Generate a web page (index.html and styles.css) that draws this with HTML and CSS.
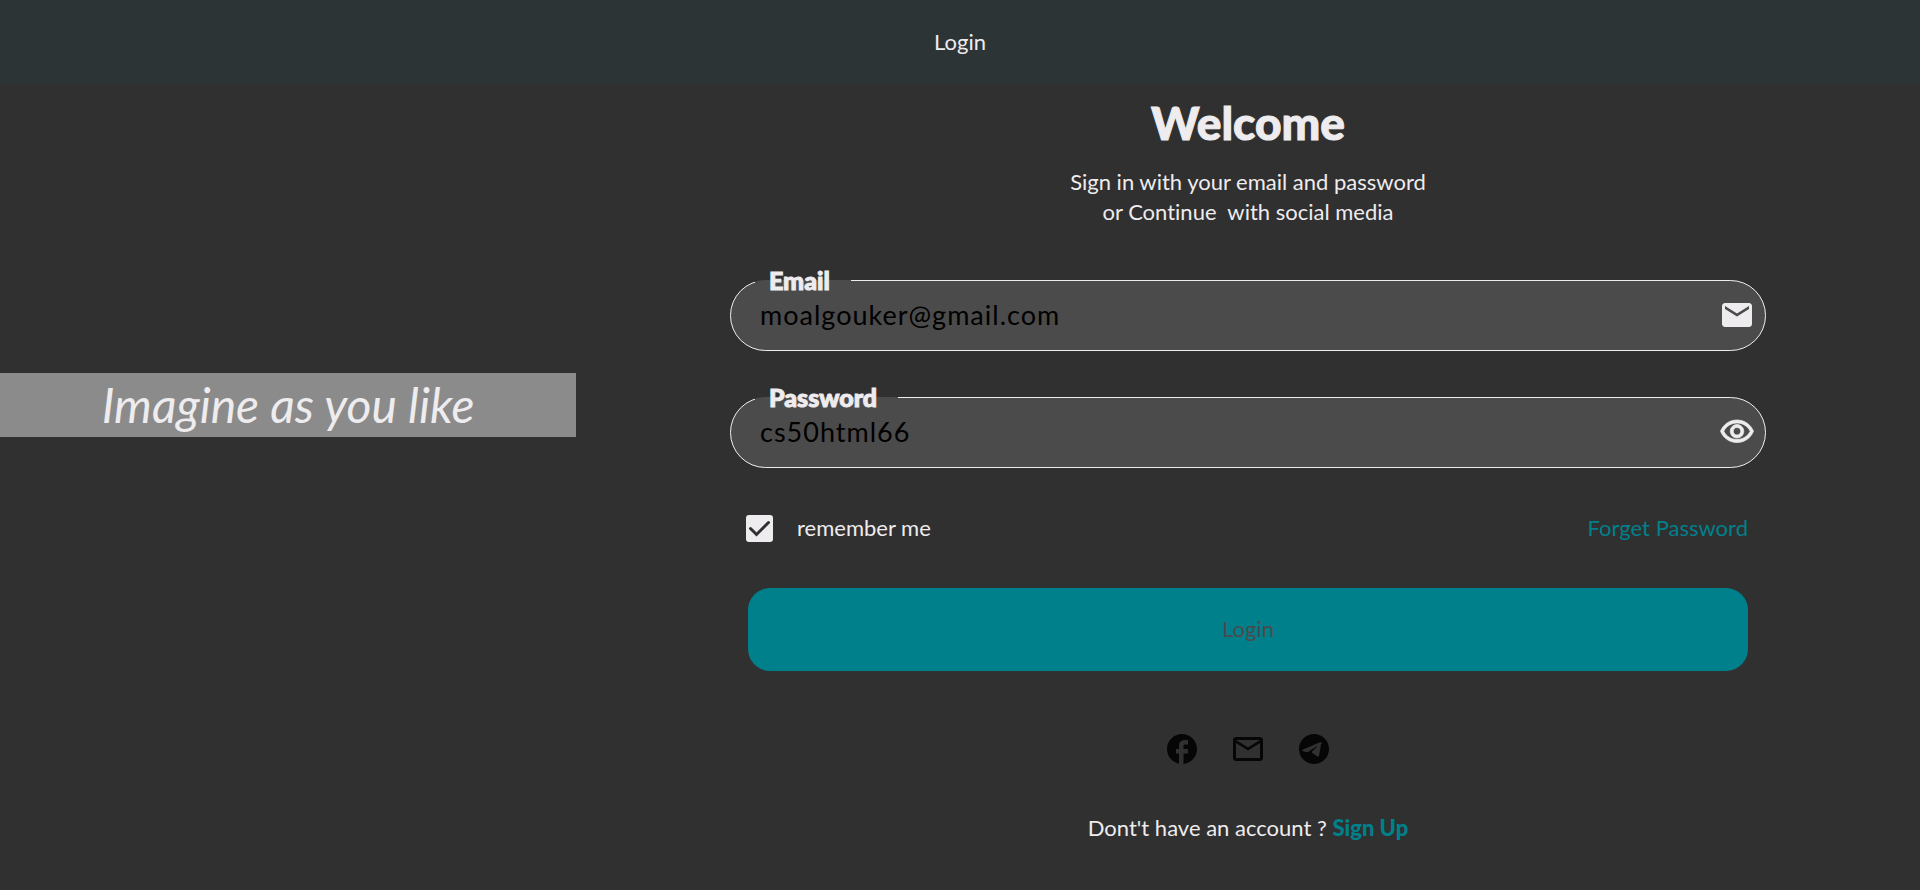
FILE: index.html
```html
<!DOCTYPE html>
<html lang="en">
<head>
<meta charset="utf-8">
<title>Login</title>
<link rel="stylesheet" href="styles.css">
</head>
<body>
<header class="app-bar">Login</header>
<main class="layout">
  <aside class="side"><p class="banner">Imagine as you like</p></aside>
  <section class="panel">
    <h1 class="title">Welcome</h1>
    <p class="intro">Sign in with your email and password<br>or Continue&nbsp; with social media</p>
    <form class="form">
      <fieldset class="field">
        <legend class="legend"><label for="email">Email</label></legend>
        <div class="control">
          <input class="input" id="email" type="email" value="moalgouker@gmail.com">
          <svg class="icon" viewBox="0 0 24 24" aria-hidden="true"><path d="M20 4H4c-1.100 0-1.990.9-1.990 2L2 18c0 1.100.9 2 2 2h16c1.100 0 2-.9 2-2V6c0-1.100-.9-2-2-2zm0 4l-8 5-8-5V6l8 5 8-5v2z"/></svg>
        </div>
      </fieldset>
      <fieldset class="field">
        <legend class="legend"><label for="password">Password</label></legend>
        <div class="control">
          <input class="input" id="password" type="text" value="cs50html66">
          <button class="icon-button" type="button" aria-label="Hide password">
            <svg class="icon icon-bold" viewBox="0 0 24 24" aria-hidden="true"><path d="M12 6c3.790 0 7.170 2.130 8.820 5.500C19.170 14.870 15.790 17 12 17s-7.170-2.130-8.820-5.500C4.830 8.130 8.210 6 12 6m0-2C7 4 2.730 7.110 1 11.500 2.730 15.890 7 19 12 19s9.270-3.110 11-7.500C21.270 7.110 17 4 12 4zm0 5c1.380 0 2.500 1.120 2.500 2.500S13.380 14 12 14s-2.500-1.120-2.500-2.500S10.620 9 12 9m0-2c-2.480 0-4.500 2.020-4.500 4.500S9.520 16 12 16s4.500-2.020 4.500-4.500S14.480 7 12 7z"/></svg>
          </button>
        </div>
      </fieldset>
      <div class="options">
        <label class="remember">
          <span class="check">
            <input class="check-input" type="checkbox" checked>
            <svg class="check-mark" viewBox="0 0 18 18" aria-hidden="true"><path d="M3 9l4 4 8-8"/></svg>
          </span>
          remember me
        </label>
        <a class="link" href="#forgot">Forget Password</a>
      </div>
      <button class="submit" type="submit">Login</button>
    </form>
    <nav class="social" aria-label="Social media">
      <a class="social-link" href="#facebook" aria-label="Facebook"><svg class="icon" viewBox="0 0 24 24"><path d="M22 12c0-5.520-4.480-10-10-10S2 6.480 2 12c0 4.840 3.440 8.870 8 9.800V15H8v-3h2V9.500C10 7.570 11.570 6 13.500 6H16v3h-2c-.55 0-1 .45-1 1v2h3v3h-3v6.950c5.050-.5 9-4.760 9-9.950z"/></svg></a>
      <a class="social-link" href="#mail" aria-label="Mail"><svg class="icon" viewBox="0 0 24 24"><path d="M22 6c0-1.100-.9-2-2-2H4c-1.100 0-2 .9-2 2v12c0 1.100.9 2 2 2h16c1.100 0 2-.9 2-2V6zm-2 0l-8 5-8-5h16zm0 12H4V8l8 5 8-5v10z"/></svg></a>
      <a class="social-link" href="#telegram" aria-label="Telegram"><svg class="icon" viewBox="0 0 24 24"><path d="M12 2C6.480 2 2 6.480 2 12s4.480 10 10 10 10-4.480 10-10S17.520 2 12 2zm4.640 6.800c-.15 1.580-.8 5.420-1.130 7.190-.14.75-.42 1-.68 1.030-.58.05-1.020-.38-1.580-.75-.88-.58-1.380-.94-2.230-1.500-.99-.65-.35-1.010.22-1.590.15-.15 2.710-2.480 2.760-2.690.01-.03.01-.14-.07-.2s-.17-.04-.25-.02c-.11.02-1.790 1.140-5.060 3.350-.48.33-.91.49-1.300.48-.43-.01-1.250-.24-1.870-.44-.75-.24-1.350-.37-1.300-.79.03-.22.33-.44.89-.67 3.500-1.520 5.830-2.530 6.990-3.010 3.330-1.390 4.020-1.630 4.470-1.630.1 0 .32.02.47.14.12.1.16.23.17.33.02.11.03.31.01.4z"/></svg></a>
    </nav>
    <p class="signup">Dont't have an account ? <a class="link link-strong" href="#signup">Sign Up</a></p>
  </section>
</main>
</body>
</html>
```
FILE: styles.css
```css
* { box-sizing: border-box; }
body {
  margin: 0;
  min-height: 100vh;
  display: flex;
  flex-direction: column;
  background: #303030;
  color: #eeecee;
  font: 400 22px/30px Lato, "Liberation Sans", sans-serif;
  font-variant-ligatures: none;
}
.app-bar {
  padding: 27px;
  background: #2d3436;
  text-align: center;
}
.layout {
  flex: 1;
  display: grid;
  grid-template-columns: 3fr 7fr;
}
.side { padding-top: 289px; }
.banner {
  margin: 0;
  padding: 5px;
  background: #8b8b8b;
  font-size: 48px;
  line-height: 54px;
  font-style: italic;
  text-align: center;
}
.panel {
  display: flex;
  flex-direction: column;
  align-items: center;
  padding: 12px 0;
}
.title {
  margin: 0;
  font-size: 46px;
  line-height: 54px;
  font-weight: 900;
  -webkit-text-stroke: 1px currentColor;
}
.intro {
  margin: 17px 0 40px;
  text-align: center;
}
.form {
  width: 100%;
  padding: 0 154px;
}
.field {
  margin: 0 0 33px;
  padding: 0 10px 13px 29px;
  min-width: 0;
  border: 1px solid #eeecee;
  border-radius: 36px;
  background: #4b4b4b;
}
.legend {
  margin-left: -5px;
  padding: 0 21px 0 14px;
  font-size: 25px;
  line-height: 26px;
  font-weight: 900;
  -webkit-text-stroke: 1px currentColor;
}
.control {
  display: flex;
  align-items: center;
  height: 44px;
}
.input {
  flex: 1;
  min-width: 0;
  padding: 0;
  border: 0;
  outline: 0;
  background: transparent;
  color: #000;
  font: 400 27px/36px Lato, "Liberation Sans", sans-serif;
  letter-spacing: 1px;
}
.icon {
  display: block;
  width: 36px;
  height: 36px;
  fill: currentColor;
}
.icon-bold {
  stroke: currentColor;
  stroke-width: 0.5;
}
.icon-button {
  padding: 0;
  border: 0;
  background: none;
  color: inherit;
}
.options {
  display: flex;
  align-items: center;
  justify-content: space-between;
  padding: 12px 18px 0 16px;
}
.remember {
  display: flex;
  align-items: center;
  gap: 24px;
}
.check {
  position: relative;
  width: 27px;
  height: 27px;
}
.check-input {
  appearance: none;
  display: block;
  width: 100%;
  height: 100%;
  margin: 0;
  border-radius: 3px;
  background: #eeecee;
}
.check-mark {
  position: absolute;
  inset: 0;
  fill: none;
  stroke: #303030;
  stroke-width: 2;
  stroke-linecap: round;
}
.link {
  color: #00808b;
  text-decoration: none;
}
.link-strong { font-weight: 900; }
.submit {
  display: block;
  width: calc(100% - 36px);
  height: 83px;
  margin: 45px auto 0;
  padding: 0 0 2px;
  border: 0;
  border-radius: 22px;
  background: #00808b;
  color: #4b4b4b;
  font: 400 22px/30px Lato, "Liberation Sans", sans-serif;
}
.social {
  display: flex;
  gap: 30px;
  margin-top: 60px;
}
.social-link { color: #060606; }
.signup { margin: 46px 0 0; }
```
